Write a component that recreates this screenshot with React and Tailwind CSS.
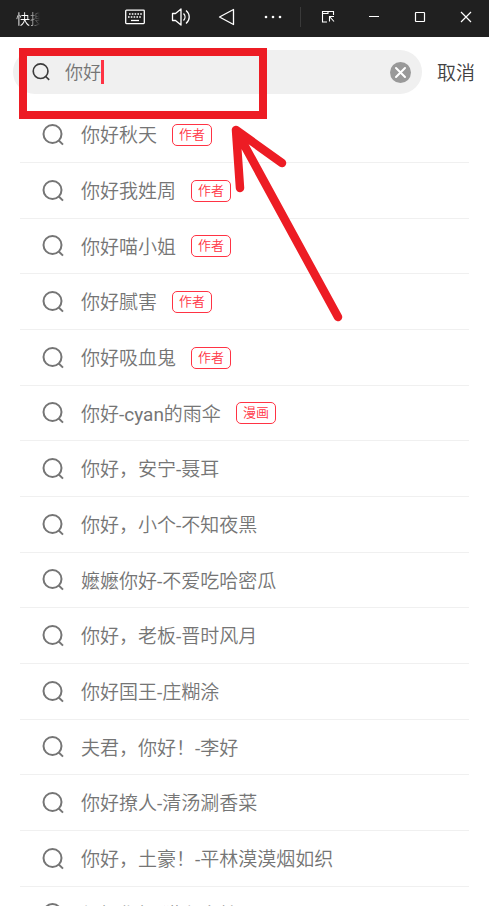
import React, { useState } from 'react';

const suggestions = [
  { text: '你好秋天', tag: '作者' },
  { text: '你好我姓周', tag: '作者' },
  { text: '你好喵小姐', tag: '作者' },
  { text: '你好腻害', tag: '作者' },
  { text: '你好吸血鬼', tag: '作者' },
  { text: '你好-cyan的雨伞', tag: '漫画' },
  { text: '你好，安宁-聂耳' },
  { text: '你好，小个-不知夜黑' },
  { text: '嬷嬷你好-不爱吃哈密瓜' },
  { text: '你好，老板-晋时风月' },
  { text: '你好国王-庄糊涂' },
  { text: '夫君，你好！-李好' },
  { text: '你好撩人-清汤涮香菜' },
  { text: '你好，土豪！-平林漠漠烟如织' },
  { text: '得好你好-猫在白枝周' },
];

const SearchIcon = ({ className }) => (
  <svg className={className} viewBox="0 0 22 22" fill="none" stroke="currentColor" strokeWidth="2">
    <circle cx="10.5" cy="10" r="9" />
    <path d="M16.5 16.2L21 20.6" />
  </svg>
);

// --- Title bar icons ---
const KeyboardIcon = () => (
  <svg className="w-5 h-4" viewBox="0 0 20 16" fill="none" stroke="currentColor" strokeWidth="1.3">
    <rect x="0.7" y="1.2" width="18.6" height="13.4" rx="0.8" />
    <path d="M4 5h13M3 8h13" strokeWidth="1.6" strokeDasharray="1.6 1.2" />
    <path d="M6 11.5h8" />
  </svg>
);

const VolumeIcon = () => (
  <svg className="w-5 h-5" viewBox="0 0 20 20" fill="none" stroke="currentColor" strokeWidth="1.3" strokeLinejoin="round">
    <path d="M1.5 6.5v7h3l5.500 4.500v-16L4.500 6.500z" />
    <path d="M12.500 6.500c2 2 2 5 0 7M15 3.500c4.300 3.500 4.300 9.500 0 13" />
  </svg>
);

const BackIcon = () => (
  <svg className="w-5 h-5" viewBox="0 0 20 20" fill="none" stroke="currentColor" strokeWidth="1.3" strokeLinejoin="round">
    <path d="M16.500 2.500v15L2.500 10z" />
  </svg>
);

const MoreIcon = () => (
  <svg className="w-5 h-5" viewBox="0 0 20 20" fill="currentColor">
    <circle cx="3" cy="10" r="1.3" />
    <circle cx="10" cy="10" r="1.3" />
    <circle cx="17" cy="10" r="1.3" />
  </svg>
);

const PopOutIcon = () => (
  <svg className="w-4 h-4" viewBox="0 0 16 16" fill="none" stroke="currentColor" strokeWidth="1.1">
    <path d="M13.500 6V2.500h-11v10.500H7" />
    <path d="M2.500 4.500h5.500V2.500" />
    <path d="M9.500 12.500V7.500h4.500M9.500 7.500l4.500 5" />
  </svg>
);

const MinimizeIcon = () => (
  <svg className="w-4 h-4" viewBox="0 0 16 16" stroke="currentColor" strokeWidth="1">
    <path d="M3 7.500h10" />
  </svg>
);

const MaximizeIcon = () => (
  <svg className="w-4 h-4" viewBox="0 0 16 16" fill="none" stroke="currentColor" strokeWidth="1.2">
    <rect x="3.500" y="3.500" width="9" height="9" rx="0.5" />
  </svg>
);

const CloseIcon = () => (
  <svg className="w-4 h-4" viewBox="0 0 16 16" stroke="currentColor" strokeWidth="1.2">
    <path d="M3 3l10 10M13 3l-10 10" />
  </svg>
);

const BarButton = ({ label, children }) => (
  <button type="button" aria-label={label} className="w-[46px] h-full flex items-center justify-center">
    {children}
  </button>
);

const TitleBar = () => (
  <header className="h-[37px] shrink-0 bg-[#202020] text-white flex items-start justify-between pl-4">
    <span className="w-6 overflow-hidden whitespace-nowrap text-sm leading-[38px] bg-gradient-to-r from-white from-50% to-transparent bg-clip-text text-transparent">
      快搜
    </span>
    <div className="h-[34px] flex items-center">
      <BarButton label="键盘"><KeyboardIcon /></BarButton>
      <BarButton label="音量"><VolumeIcon /></BarButton>
      <BarButton label="返回"><BackIcon /></BarButton>
      <BarButton label="更多"><MoreIcon /></BarButton>
      <span className="w-px h-5 mx-1 bg-[#3a3a3a]"></span>
      <BarButton label="小窗"><PopOutIcon /></BarButton>
      <BarButton label="最小化"><MinimizeIcon /></BarButton>
      <BarButton label="最大化"><MaximizeIcon /></BarButton>
      <BarButton label="关闭"><CloseIcon /></BarButton>
    </div>
  </header>
);

const SearchBar = () => {
  const [query, setQuery] = useState('你好');

  return (
    <form className="mt-[13px] pl-[13px] pr-[14px] flex items-center" onSubmit={(e) => e.preventDefault()}>
      <div className="relative flex-1 min-w-0 h-11 pl-[19px] pr-[11px] rounded-full bg-[#f0f0f0] flex items-center">
        <SearchIcon className="w-[18px] h-[18px] shrink-0 text-[#3c3c3c]" />
        <input
          type="text"
          aria-label="搜索"
          value={query}
          onChange={(e) => setQuery(e.target.value)}
          className="ml-[15px] pt-0.5 w-full min-w-0 bg-transparent text-lg text-[#757575] caret-[#ff3344] outline-none"
        />
        {/* Kursor teks */}
        <span className="absolute left-[88px] top-[10px] w-[3px] h-6 bg-[#ff3344]"></span>
        <button type="button" aria-label="清除" onClick={() => setQuery('')} className="shrink-0">
          <svg className="w-[21px] h-[21px]" viewBox="0 0 21 21">
            <circle cx="10.500" cy="10.500" r="10.500" fill="#999" />
            <path d="M6 6l9 9M15 6l-9 9" stroke="#fff" strokeWidth="2" strokeLinecap="round" />
          </svg>
        </button>
      </div>
      <button type="button" className="ml-[15px] pt-1 shrink-0 text-[19px] text-[#414141]">取消</button>
    </form>
  );
};

const SuggestionItem = ({ text, tag }) => (
  <li className="h-14 nth-[3n]:h-[55px] border-b border-[#f0f0f0]">
    <button type="button" className="w-full h-full pl-[22px] flex items-center text-left">
      <SearchIcon className="w-[22px] h-[22px] shrink-0 text-[#757575]" />
      <span className="ml-[17px] pt-1 text-[19px] whitespace-nowrap text-[#757575]">{text}</span>
      {tag && (
        <span className="ml-[15px] px-1.5 border border-[#ff3344] rounded-[5px] text-[13px] leading-5 whitespace-nowrap text-[#ff3344]">
          {tag}
        </span>
      )}
    </button>
  </li>
);

const Annotation = () => (
  <>
    <div className="absolute left-[19px] top-12 w-[248px] h-[71px] border-8 border-[#ed1c24] pointer-events-none"></div>
    <svg className="absolute left-[230px] top-[124px] w-[114px] h-[200px] pointer-events-none" viewBox="0 0 114 200" fill="none" stroke="#ed1c24" strokeWidth="8.5" strokeLinecap="round" strokeLinejoin="round">
      <path d="M108 193L6 6L52 39M6 6L10 64M6 6L18 16" />
    </svg>
  </>
);

const App = () => (
  <div className="relative h-screen overflow-hidden bg-white flex flex-col font-['Roboto','Noto_Sans_CJK_SC_DemiLight','Noto_Sans_CJK_SC',sans-serif]">
    <TitleBar />
    <SearchBar />
    <ul className="mt-[13px] mx-5 shrink-0">
      {suggestions.map((item) => (
        <SuggestionItem key={item.text} text={item.text} tag={item.tag} />
      ))}
    </ul>
    <Annotation />
  </div>
);

export default App;
